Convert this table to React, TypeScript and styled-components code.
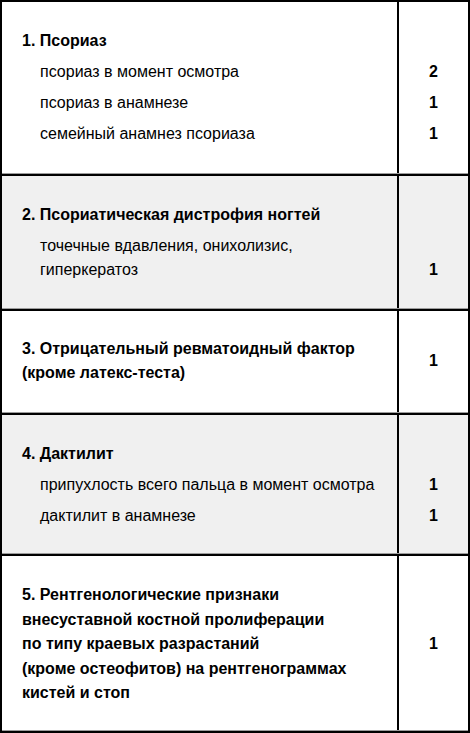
import React from 'react';
import styled, { createGlobalStyle } from 'styled-components';

const Global = createGlobalStyle`
  html, body { margin: 0; padding: 0; background: #fff; }
  body { font-family: "Liberation Sans", Arial, sans-serif; color: #000; }
`;

const Table = styled.div`
  width: 470px;
  box-sizing: border-box;
  border: 2px solid #000;
  font-size: 16px;
  line-height: 24px;
`;

const Group = styled.section<{ $shaded: boolean; $lh: number; $pt: number; $pb: number }>`
  display: grid;
  grid-template-columns: 1fr 69px;
  padding: ${(p) => p.$pt}px 0 ${(p) => p.$pb}px;
  line-height: ${(p) => p.$lh}px;
  background:
    linear-gradient(#000, #000) no-repeat 395px 0 / 2px 100%,
    ${(p) => (p.$shaded ? '#f0f0f0' : '#fff')};
  border-bottom: 1px solid #9c9c9c;
  & + & {
    border-top: 2px solid #000;
  }
`;

const Title = styled.div`
  grid-column: 1;
  padding-left: 20px;
  font-weight: bold;
`;

const Item = styled.div`
  grid-column: 1;
  padding: 7px 0 0 38px;
`;

const Value = styled.div<{ $align: 'center' | 'end' }>`
  grid-column: 2;
  align-self: ${(p) => p.$align};
  text-align: center;
  font-weight: bold;
`;

type Row = { text: string[]; value: string; align?: 'center' | 'end' };
type Block = {
  title: string[];
  value?: string;
  items?: Row[];
  lh?: number;
  pt: number;
  pb: number;
};

const blocks: Block[] = [
  {
    title: ['1. Псориаз'],
    items: [
      { text: ['псориаз в момент осмотра'], value: '2' },
      { text: ['псориаз в анамнезе'], value: '1' },
      { text: ['семейный анамнез псориаза'], value: '1' },
    ],
    pt: 27,
    pb: 27,
  },
  {
    title: ['2. Псориатическая дистрофия ногтей'],
    items: [
      { text: ['точечные вдавления, онихолизис,', 'гиперкератоз'], value: '1', align: 'end' },
    ],
    pt: 27,
    pb: 26,
  },
  {
    title: ['3. Отрицательный ревматоидный фактор', '(кроме латекс-теста)'],
    value: '1',
    pt: 26,
    pb: 27,
  },
  {
    title: ['4. Дактилит'],
    items: [
      { text: ['припухлость всего пальца в момент осмотра'], value: '1' },
      { text: ['дактилит в анамнезе'], value: '1' },
    ],
    pt: 27,
    pb: 25,
  },
  {
    title: [
      '5. Рентгенологические признаки',
      'внесуставной костной пролиферации',
      'по типу краевых разрастаний',
      '(кроме остеофитов) на рентгенограммах',
      'кистей и стоп',
    ],
    value: '1',
    lh: 24.5,
    pt: 27,
    pb: 24,
  },
];

const Lines: React.FC<{ lines: string[] }> = ({ lines }) => (
  <>
    {lines.map((l, i) => (
      <React.Fragment key={i}>
        {i > 0 && <br />}
        {l}
      </React.Fragment>
    ))}
  </>
);

export default function App() {
  return (
    <>
      <Global />
      <Table>
        {blocks.map((b, i) => (
          <Group key={i} $shaded={i % 2 === 1} $lh={b.lh ?? 24} $pt={b.pt} $pb={b.pb}>
            <Title>
              <Lines lines={b.title} />
            </Title>
            {b.value ? <Value $align="center">{b.value}</Value> : <div />}
            {b.items?.map((it, j) => (
              <React.Fragment key={j}>
                <Item>
                  <Lines lines={it.text} />
                </Item>
                <Value $align={it.align ?? 'end'}>{it.value}</Value>
              </React.Fragment>
            ))}
          </Group>
        ))}
      </Table>
    </>
  );
}
